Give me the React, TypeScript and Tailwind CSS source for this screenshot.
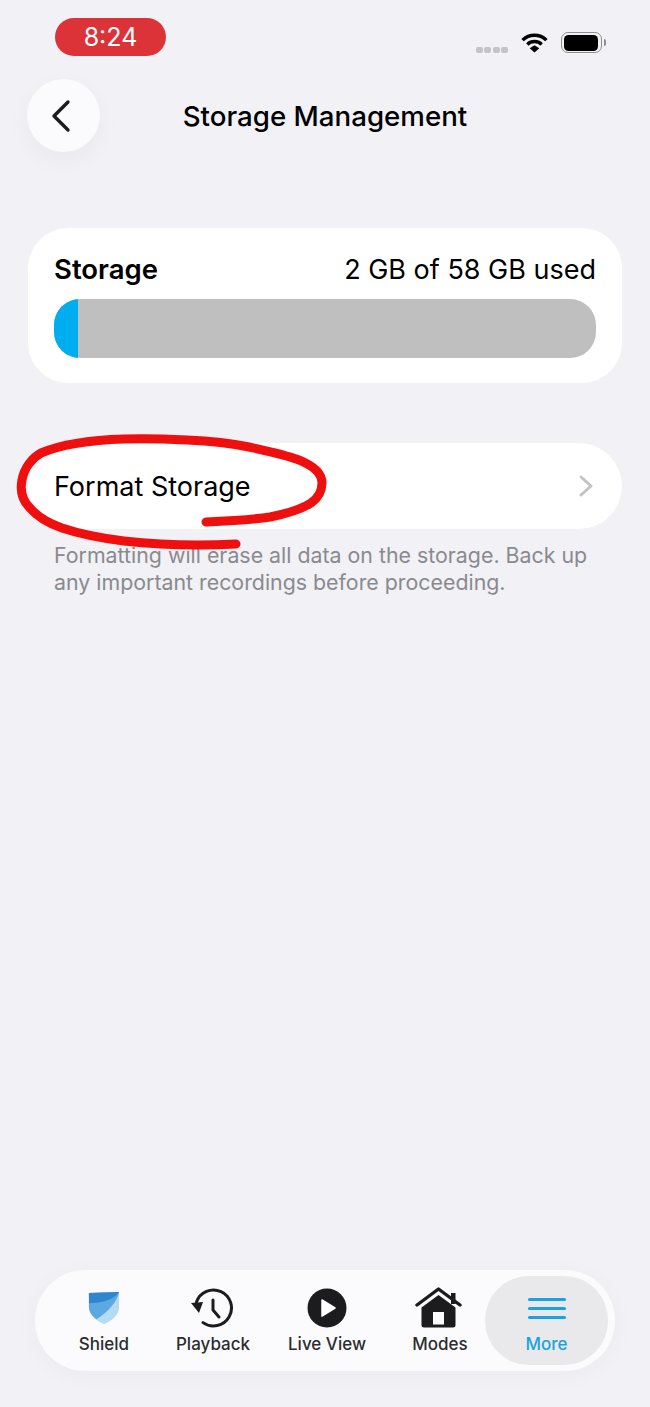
const tabs = [
    { label: "Shield", icon: <ShieldIcon />, gap: "" },
    { label: "Playback", icon: <PlaybackIcon />, gap: "ml-[19px]" },
    { label: "Live View", icon: <PlayIcon />, gap: "ml-[24px]" },
    { label: "Modes", icon: <HomeIcon />, gap: "ml-[23px]" },
];

function ShieldIcon() {
    return (
        <svg width="32" height="34" viewBox="0 0 34 36">
            <path d="M1 2 L33 1 V17 C33 26 25 32 17 35 C9 32 1 26 1 17 Z" fill="#b5daf3" />
            <path d="M1 2 L33 1 C31 12 20 23 9 30 C4 26 1 22 1 17 Z" fill="#5ba9e0" />
            <path d="M1 2 L33 1 C28 9 14 13 1 13 Z" fill="#2f86cf" />
        </svg>
    );
}

function PlaybackIcon() {
    return (
        <svg width="44" height="40" viewBox="0 0 44 40" fill="none">
            <path d="M5.5 14 A18 18 0 1 1 12 34.6" stroke="#1c1c1e" strokeWidth="3" strokeLinecap="round" />
            <path d="M0 15 L12 14 L8 25 Z" fill="#1c1c1e" />
            <path d="M22 12 V22 L28 29" stroke="#1c1c1e" strokeWidth="3" strokeLinecap="round" strokeLinejoin="round" />
        </svg>
    );
}

function PlayIcon() {
    return (
        <svg width="40" height="40" viewBox="0 0 40 40">
            <circle cx="20" cy="20" r="19.5" fill="#1c1c1e" />
            <path d="M15 12 L28 20 L15 28 Z" fill="#ffffff" strokeLinejoin="round" stroke="#ffffff" strokeWidth="1.5" />
        </svg>
    );
}

function HomeIcon() {
    return (
        <svg width="47" height="41" viewBox="0 0 47 41" className="mr-[3px]">
            <path d="M6.5 20.5 L23.5 8 L40.5 20.5 V38 A2.5 2.5 0 0 1 38 40.5 H9 A2.5 2.5 0 0 1 6.5 38 Z" fill="#1c1c1e" />
            <rect x="18" y="25" width="11" height="12.5" fill="#fbfbfe" />
            <path d="M2 18 L23.5 2 L45 18" fill="none" stroke="#1c1c1e" strokeWidth="3.4" strokeLinecap="round" strokeLinejoin="round" />
            <rect x="36" y="6" width="4.5" height="11" fill="#1c1c1e" />
        </svg>
    );
}

export default function App() {
    return (
        <div
            className="relative flex h-[1407px] w-[650px] flex-col overflow-hidden bg-[#f1f1f6] text-black"
            style={{ fontFamily: "Inter, 'Noto Sans', sans-serif" }}
        >
            {/* Status bar */}
            <div className="flex h-[56px] items-start justify-between pl-[55px] pr-[44px] pt-[18px]">
                <div className="flex h-[38px] w-[111px] items-center justify-center rounded-full bg-[#dc3338] pt-[1px] text-[25px] text-white">
                    8:24
                </div>
                <div className="flex items-end pt-[14px]">
                    <div className="flex gap-[1.5px]">
                        {[0, 1, 2, 3].map((i) => (
                            <span key={i} className="h-[6px] w-[7px] rounded-[2px] bg-[#c4c4c8]" />
                        ))}
                    </div>
                    <svg className="ml-[12px]" width="29" height="21" viewBox="0 0 29 22" fill="none">
                        <path d="M2 8.5 A18 18 0 0 1 27 8.5" stroke="#000" strokeWidth="3.6" />
                        <path d="M7 13 A11 11 0 0 1 22 13" stroke="#000" strokeWidth="3.6" />
                        <path d="M9.5 17 L14.5 14 L19.5 17 L14.5 21.5 Z" fill="#000" />
                    </svg>
                    <div className="ml-[12px] flex items-center">
                        <div className="flex h-[21px] w-[41px] items-center justify-center rounded-[7px] border-[1.5px] border-[#8e8e92] py-[1.5px] pl-[1.5px] pr-[3px]">
                            <div className="h-full w-full rounded-[4.5px] bg-black" />
                        </div>
                        <div className="ml-[2px] h-[7px] w-[2px] rounded-r-full bg-[#8e8e92]" />
                    </div>
                </div>
            </div>

            {/* Header */}
            <div className="mt-[23px] flex items-center px-[27px]">
                <button className="flex h-[73px] w-[73px] items-center justify-center rounded-full bg-[#fbfbfe] shadow-[0_8px_24px_rgba(0,0,0,0.04)]">
                    <svg width="22" height="34" viewBox="0 0 22 34" fill="none" className="mr-[5px]">
                        <path d="M18 3 L4 17 L18 31" stroke="#1c1c1e" strokeWidth="3.4" strokeLinecap="round" strokeLinejoin="round" />
                    </svg>
                </button>
                <h1 className="mr-[73px] flex-1 pt-[3px] text-center text-[27.7px] font-medium">Storage Management</h1>
            </div>

            {/* Storage card */}
            <div className="mx-[28px] mt-[76px] h-[155px] rounded-[40px] bg-white px-[26px] pt-[23px]">
                <div className="flex items-baseline justify-between text-[27px] leading-[36px]">
                    <span className="text-[27.5px] font-semibold">Storage</span>
                    <span>2 GB of 58 GB used</span>
                </div>
                <div className="mt-[11px] flex h-[59px] overflow-hidden rounded-[26px] bg-[#bfbfbf]">
                    <div className="w-[24px] bg-[#00adef]" />
                </div>
            </div>

            {/* Format row */}
            <div className="mx-[28px] mt-[60px] flex h-[86px] items-center justify-between rounded-[43px] bg-white pl-[26px] pr-[28px]">
                <span className="pt-[2px] text-[27px]">Format Storage</span>
                <svg width="16" height="24" viewBox="0 0 16 24" fill="none">
                    <path d="M3 3 L13 12 L3 21" stroke="#c4c4c7" strokeWidth="3" strokeLinecap="round" strokeLinejoin="round" />
                </svg>
            </div>
            <p className="ml-[54px] mt-[13px] w-[560px] text-[21.35px] leading-[27px] text-[#8a8a8e]">
                Formatting will erase all data on the storage. Back up any important recordings before proceeding.
            </p>

            {/* Red marker circle */}
            <svg className="absolute left-0 top-0" width="650" height="600" viewBox="0 0 650 600" fill="none">
                <path
                    d="M236 544 C200 546 160 545 124 541 C100 538 80 534 62 528 C45 522 36 515 30 508 C22 500 20 490 22 480 C24 468 32 458 41 453 C60 445 90 440 124 439 C146 438 168 439 187 440 C210 441 230 443 249 447 C268 451 286 455 299 460 C314 466 322 474 322 483 C322 492 318 498 311 503 C300 510 285 514 270 517 C250 520 228 521 206 522"
                    stroke="#f00f0f"
                    strokeWidth="9"
                    strokeLinecap="round"
                    strokeLinejoin="round"
                />
            </svg>

            {/* Tab bar */}
            <div className="mx-[35px] mb-[36px] mt-auto flex h-[101px] items-center rounded-[50px] bg-[#fbfbfe] pl-[24px] pr-[6px] shadow-[0_4px_24px_rgba(0,0,0,0.03)]">
                {tabs.map((tab) => (
                    <div key={tab.label} className={`flex w-[90px] flex-col items-center text-[17px] font-medium text-[#2c2c2e] ${tab.gap}`}>
                        <div className="flex h-[44px] items-center justify-center">{tab.icon}</div>
                        <span className="mt-[2px] whitespace-nowrap leading-[24px]">{tab.label}</span>
                    </div>
                ))}
                <div className="flex h-[89px] w-[123px] flex-col items-center rounded-[44px] bg-[#e9e9ec] pt-[22px] text-[17px] font-medium text-[#1aa3e0]">
                    <div className="flex h-[21px] w-[38px] flex-col justify-between">
                        <span className="h-[3px] rounded-full bg-[#1aa3e0]" />
                        <span className="h-[3px] rounded-full bg-[#1aa3e0]" />
                        <span className="h-[3px] rounded-full bg-[#1aa3e0]" />
                    </div>
                    <span className="mt-[13px] leading-[24px]">More</span>
                </div>
            </div>
        </div>
    );
}
